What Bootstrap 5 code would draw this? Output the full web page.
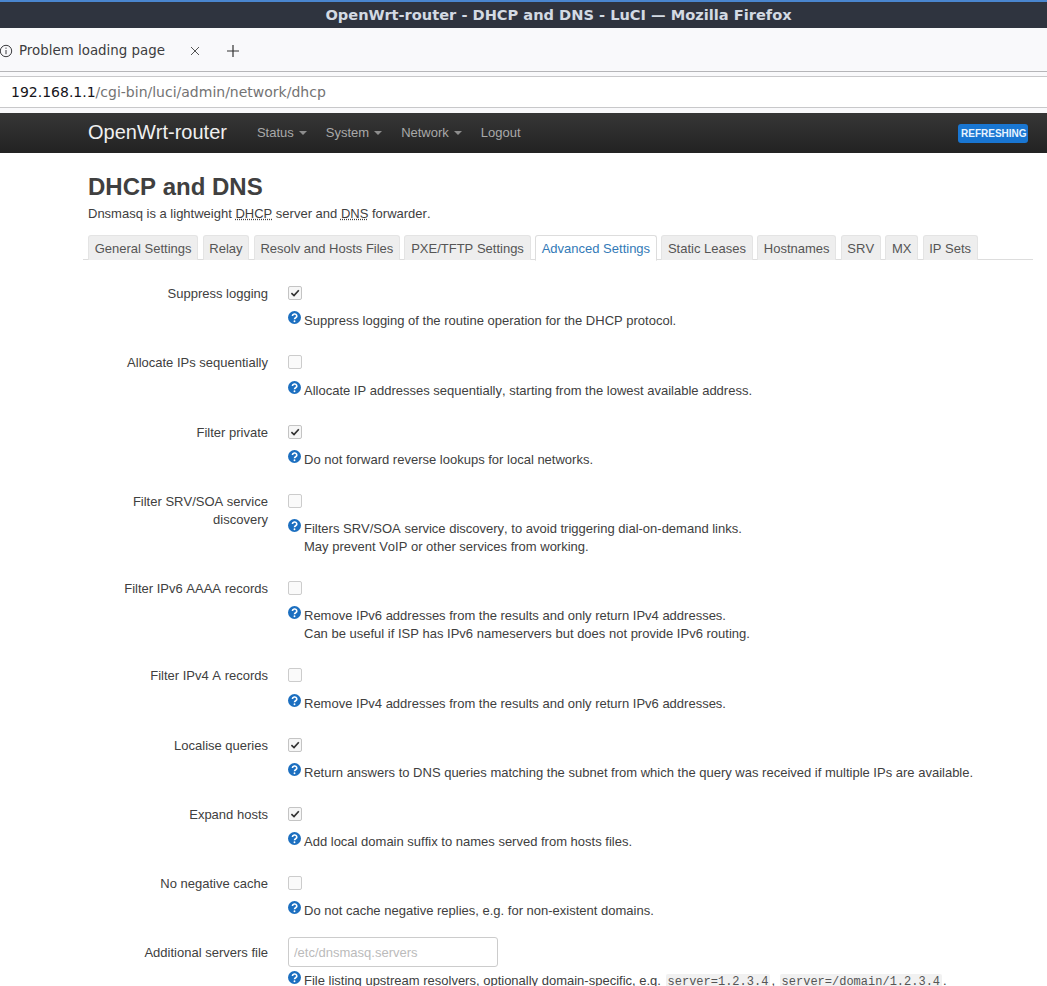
<!DOCTYPE html>
<html lang="en">
<head>
<meta charset="utf-8">
<title>OpenWrt-router - DHCP and DNS - LuCI</title>
<link href="https://cdn.jsdelivr.net/npm/bootstrap@5.3.0/dist/css/bootstrap.min.css" rel="stylesheet">
<style>
html,body{height:986px;overflow:hidden;background:#fff}
body{font-family:"Liberation Sans",Arial,sans-serif;font-size:13px;line-height:18px;color:#404040;font-kerning:none}
.wm-title{height:28px;background:#2f343f;border-top:2px solid #4a86cf;color:#d3dae3;font:bold 14.6px/25px "DejaVu Sans",sans-serif;text-align:center;padding-left:70px;font-kerning:normal}
.wm-chrome{font-family:"DejaVu Sans",sans-serif;background:#f9f9fb;font-kerning:normal}
.tabstrip{height:44px;padding-top:2px;border-bottom:1px solid #b5b5b8;color:#3d3d40;font-size:13.4px}
.tab-ic{margin-left:-1px;margin-right:6px}
.tab-close{margin-left:25px}
.tab-plus{margin-left:26px}
.spacer-bar{height:4px}
.urlbar{height:32px;background:#fff;border-top:1px solid #c8c8ca;border-bottom:1px solid #c8c8ca;padding-left:11px;font-size:14px;line-height:30px;color:#737373}
.urlbar b{font-weight:400;color:#15141a}
.spacer-low{height:5px}
.lu-nav{height:40px;background:linear-gradient(#363636,#222);padding:0 19px 0 88px!important}
.lu-brand{color:#f0f0f0!important;font-size:20px;padding:0;margin:0 30px 2px 0;line-height:24px}
.lu-nav .nav-link{color:#a9a9a9!important;font-size:13px;padding:0;margin-right:19px;line-height:40px}
.lu-nav .dropdown-toggle::after{margin-left:5px;vertical-align:2px;border-top-width:4px;border-right-width:4px;border-left-width:4px;color:#8d8d8d}
.lu-pill{background:#1976d2;color:#e8f4ff;font-size:10px;font-weight:700;line-height:20px;height:19px;padding:0 3px;border-radius:3px;width:70px;text-align:center;white-space:nowrap}
.lu-main{margin:0 14px 0 83px}
.lu-head{padding-left:5px}
.lu-h2{font-size:24px;font-weight:700;line-height:30px;margin:19px 0 0;color:#404040}
.lu-sub{margin:3px 0 12px;line-height:18px}
.lu-sub abbr{text-decoration:underline dotted}
.lu-tabs{gap:4.45px;padding-left:5px;border-bottom:1px solid #ddd;height:25px;flex-wrap:nowrap}
.lu-tabs .nav-link{margin:0;padding:0 5.7px;height:25px;line-height:25px;font-size:13px;color:#555;background:#eee;border:1px solid #e4e4e4;border-bottom:0;border-radius:3px 3px 0 0;white-space:nowrap}
.lu-tabs .nav-link.active{background:#fff;color:#337ab7;border:1px solid #ddd;border-bottom:1px solid #fff;height:26px}
.lu-form{padding-top:18.1px}
.lu-row{display:flex;margin-bottom:16.95px}
.lu-lab{width:185px;flex:none;text-align:right;padding-top:7px;line-height:18px}
.lu-field{margin-left:20px;flex:1;min-width:0}
.lu-ctl{min-height:30px;display:flex;align-items:center}
.lu-ctl .form-check-input{width:14px;height:14px;margin:0;border:1px solid #ccc;border-radius:2px;background-color:#fafafa;box-shadow:none;opacity:1;position:relative;top:0}
.lu-ctl .form-check-input:checked{background-color:#f6f6f6;border-color:#c4c4c4;background-size:12px 12px;background-position:center;background-image:url("data:image/svg+xml,%3csvg xmlns='http://www.w3.org/2000/svg' viewBox='0 0 12 12'%3e%3cpath fill='none' stroke='%23333' stroke-width='1.7' d='M2.4 6.2 5 8.6 9.8 3.2'/%3e%3c/svg%3e")}
.lu-input{width:210px;height:30px;font-size:13px;padding:0 5px;border:1px solid #ccc;border-radius:3px;color:#404040;box-shadow:none}
.lu-input::placeholder{color:#bbb;opacity:1}
.lu-desc{margin-top:4.3px;padding-left:16px;position:relative;line-height:18px}
.lu-q{position:absolute;left:0;top:-1px;width:13px;height:13px}
.lu-code{font-family:"Liberation Mono",monospace;font-size:12px;background:#f1f1f1;color:#555;padding:1px 2px;margin:0 1px;border-radius:2px}
</style>
</head>
<body>
<div class="wm-title">OpenWrt-router - DHCP and DNS - LuCI — Mozilla Firefox</div>
<div class="wm-chrome">
  <div class="tabstrip d-flex align-items-center">
    <svg class="tab-ic" width="14" height="14" viewBox="0 0 14 14" fill="none" stroke="#3d3d40"><circle cx="7" cy="7" r="5.7"/><path d="M7 6v4.2M7 3.6v1.2"/></svg>
    <span>Problem loading page</span>
    <svg class="tab-close" width="10" height="10" viewBox="0 0 10 10" stroke="#555" fill="none"><path d="M1 1l8 8M9 1l-8 8"/></svg>
    <svg class="tab-plus" width="14" height="14" viewBox="0 0 14 14" stroke="#333" stroke-width="1.2" fill="none"><path d="M7 1v12M1 7h12"/></svg>
  </div>
  <div class="spacer-bar"></div>
  <div class="urlbar"><b>192.168.1.1</b>/cgi-bin/luci/admin/network/dhcp</div>
  <div class="spacer-low"></div>
</div>
<nav class="navbar lu-nav d-flex flex-nowrap justify-content-start align-items-center">
  <a class="navbar-brand lu-brand" href="#">OpenWrt-router</a>
  <a class="nav-link dropdown-toggle" href="#">Status</a>
  <a class="nav-link dropdown-toggle" href="#">System</a>
  <a class="nav-link dropdown-toggle" href="#">Network</a>
  <a class="nav-link" href="#">Logout</a>
  <span class="lu-pill ms-auto">REFRESHING</span>
</nav>
<main class="lu-main">
  <div class="lu-head">
    <h2 class="lu-h2">DHCP and DNS</h2>
    <p class="lu-sub">Dnsmasq is a lightweight <abbr title="Dynamic Host Configuration Protocol">DHCP</abbr> server and <abbr title="Domain Name System">DNS</abbr> forwarder.</p>
  </div>
  <ul class="nav nav-tabs lu-tabs">
    <li class="nav-item"><a class="nav-link" href="#">General Settings</a></li>
    <li class="nav-item"><a class="nav-link" href="#">Relay</a></li>
    <li class="nav-item"><a class="nav-link" href="#">Resolv and Hosts Files</a></li>
    <li class="nav-item"><a class="nav-link" href="#">PXE/TFTP Settings</a></li>
    <li class="nav-item"><a class="nav-link active" href="#">Advanced Settings</a></li>
    <li class="nav-item"><a class="nav-link" href="#">Static Leases</a></li>
    <li class="nav-item"><a class="nav-link" href="#">Hostnames</a></li>
    <li class="nav-item"><a class="nav-link" href="#">SRV</a></li>
    <li class="nav-item"><a class="nav-link" href="#">MX</a></li>
    <li class="nav-item"><a class="nav-link" href="#">IP Sets</a></li>
  </ul>
  <svg width="0" height="0" class="position-absolute"><defs><g id="qmark"><circle cx="6.5" cy="6.5" r="6.5" fill="#1c6fc0"/><path d="M4.4 5a2.2 2 0 1 1 3.3 1.7c-.8.5-1.2.8-1.2 1.6" fill="none" stroke="#fff" stroke-width="1.6"/><circle cx="6.5" cy="10.2" r=".95" fill="#fff"/></g></defs></svg>
  <form class="lu-form">
    <div class="lu-row"><label class="lu-lab">Suppress logging</label><div class="lu-field"><div class="lu-ctl"><input class="form-check-input" type="checkbox" checked></div><div class="lu-desc"><svg class="lu-q" viewBox="0 0 13 13"><use href="#qmark"/></svg>Suppress logging of the routine operation for the DHCP protocol.</div></div></div>
    <div class="lu-row"><label class="lu-lab">Allocate IPs sequentially</label><div class="lu-field"><div class="lu-ctl"><input class="form-check-input" type="checkbox"></div><div class="lu-desc"><svg class="lu-q" viewBox="0 0 13 13"><use href="#qmark"/></svg>Allocate IP addresses sequentially, starting from the lowest available address.</div></div></div>
    <div class="lu-row"><label class="lu-lab">Filter private</label><div class="lu-field"><div class="lu-ctl"><input class="form-check-input" type="checkbox" checked></div><div class="lu-desc"><svg class="lu-q" viewBox="0 0 13 13"><use href="#qmark"/></svg>Do not forward reverse lookups for local networks.</div></div></div>
    <div class="lu-row"><label class="lu-lab">Filter SRV/SOA service discovery</label><div class="lu-field"><div class="lu-ctl"><input class="form-check-input" type="checkbox"></div><div class="lu-desc"><svg class="lu-q" viewBox="0 0 13 13"><use href="#qmark"/></svg>Filters SRV/SOA service discovery, to avoid triggering dial-on-demand links.<br>May prevent VoIP or other services from working.</div></div></div>
    <div class="lu-row"><label class="lu-lab">Filter IPv6 AAAA records</label><div class="lu-field"><div class="lu-ctl"><input class="form-check-input" type="checkbox"></div><div class="lu-desc"><svg class="lu-q" viewBox="0 0 13 13"><use href="#qmark"/></svg>Remove IPv6 addresses from the results and only return IPv4 addresses.<br>Can be useful if ISP has IPv6 nameservers but does not provide IPv6 routing.</div></div></div>
    <div class="lu-row"><label class="lu-lab">Filter IPv4 A records</label><div class="lu-field"><div class="lu-ctl"><input class="form-check-input" type="checkbox"></div><div class="lu-desc"><svg class="lu-q" viewBox="0 0 13 13"><use href="#qmark"/></svg>Remove IPv4 addresses from the results and only return IPv6 addresses.</div></div></div>
    <div class="lu-row"><label class="lu-lab">Localise queries</label><div class="lu-field"><div class="lu-ctl"><input class="form-check-input" type="checkbox" checked></div><div class="lu-desc"><svg class="lu-q" viewBox="0 0 13 13"><use href="#qmark"/></svg>Return answers to DNS queries matching the subnet from which the query was received if multiple IPs are available.</div></div></div>
    <div class="lu-row"><label class="lu-lab">Expand hosts</label><div class="lu-field"><div class="lu-ctl"><input class="form-check-input" type="checkbox" checked></div><div class="lu-desc"><svg class="lu-q" viewBox="0 0 13 13"><use href="#qmark"/></svg>Add local domain suffix to names served from hosts files.</div></div></div>
    <div class="lu-row"><label class="lu-lab">No negative cache</label><div class="lu-field"><div class="lu-ctl"><input class="form-check-input" type="checkbox"></div><div class="lu-desc"><svg class="lu-q" viewBox="0 0 13 13"><use href="#qmark"/></svg>Do not cache negative replies, e.g. for non-existent domains.</div></div></div>
    <div class="lu-row"><label class="lu-lab">Additional servers file</label><div class="lu-field"><div class="lu-ctl"><input class="form-control lu-input" type="text" placeholder="/etc/dnsmasq.servers"></div><div class="lu-desc"><svg class="lu-q" viewBox="0 0 13 13"><use href="#qmark"/></svg>File listing upstream resolvers, optionally domain-specific, e.g. <code class="lu-code">server=1.2.3.4</code>, <code class="lu-code">server=/domain/1.2.3.4</code>.</div></div></div>
  </form>
</main>
<script src="https://cdn.jsdelivr.net/npm/bootstrap@5.3.0/dist/js/bootstrap.bundle.min.js"></script>
</body>
</html>
